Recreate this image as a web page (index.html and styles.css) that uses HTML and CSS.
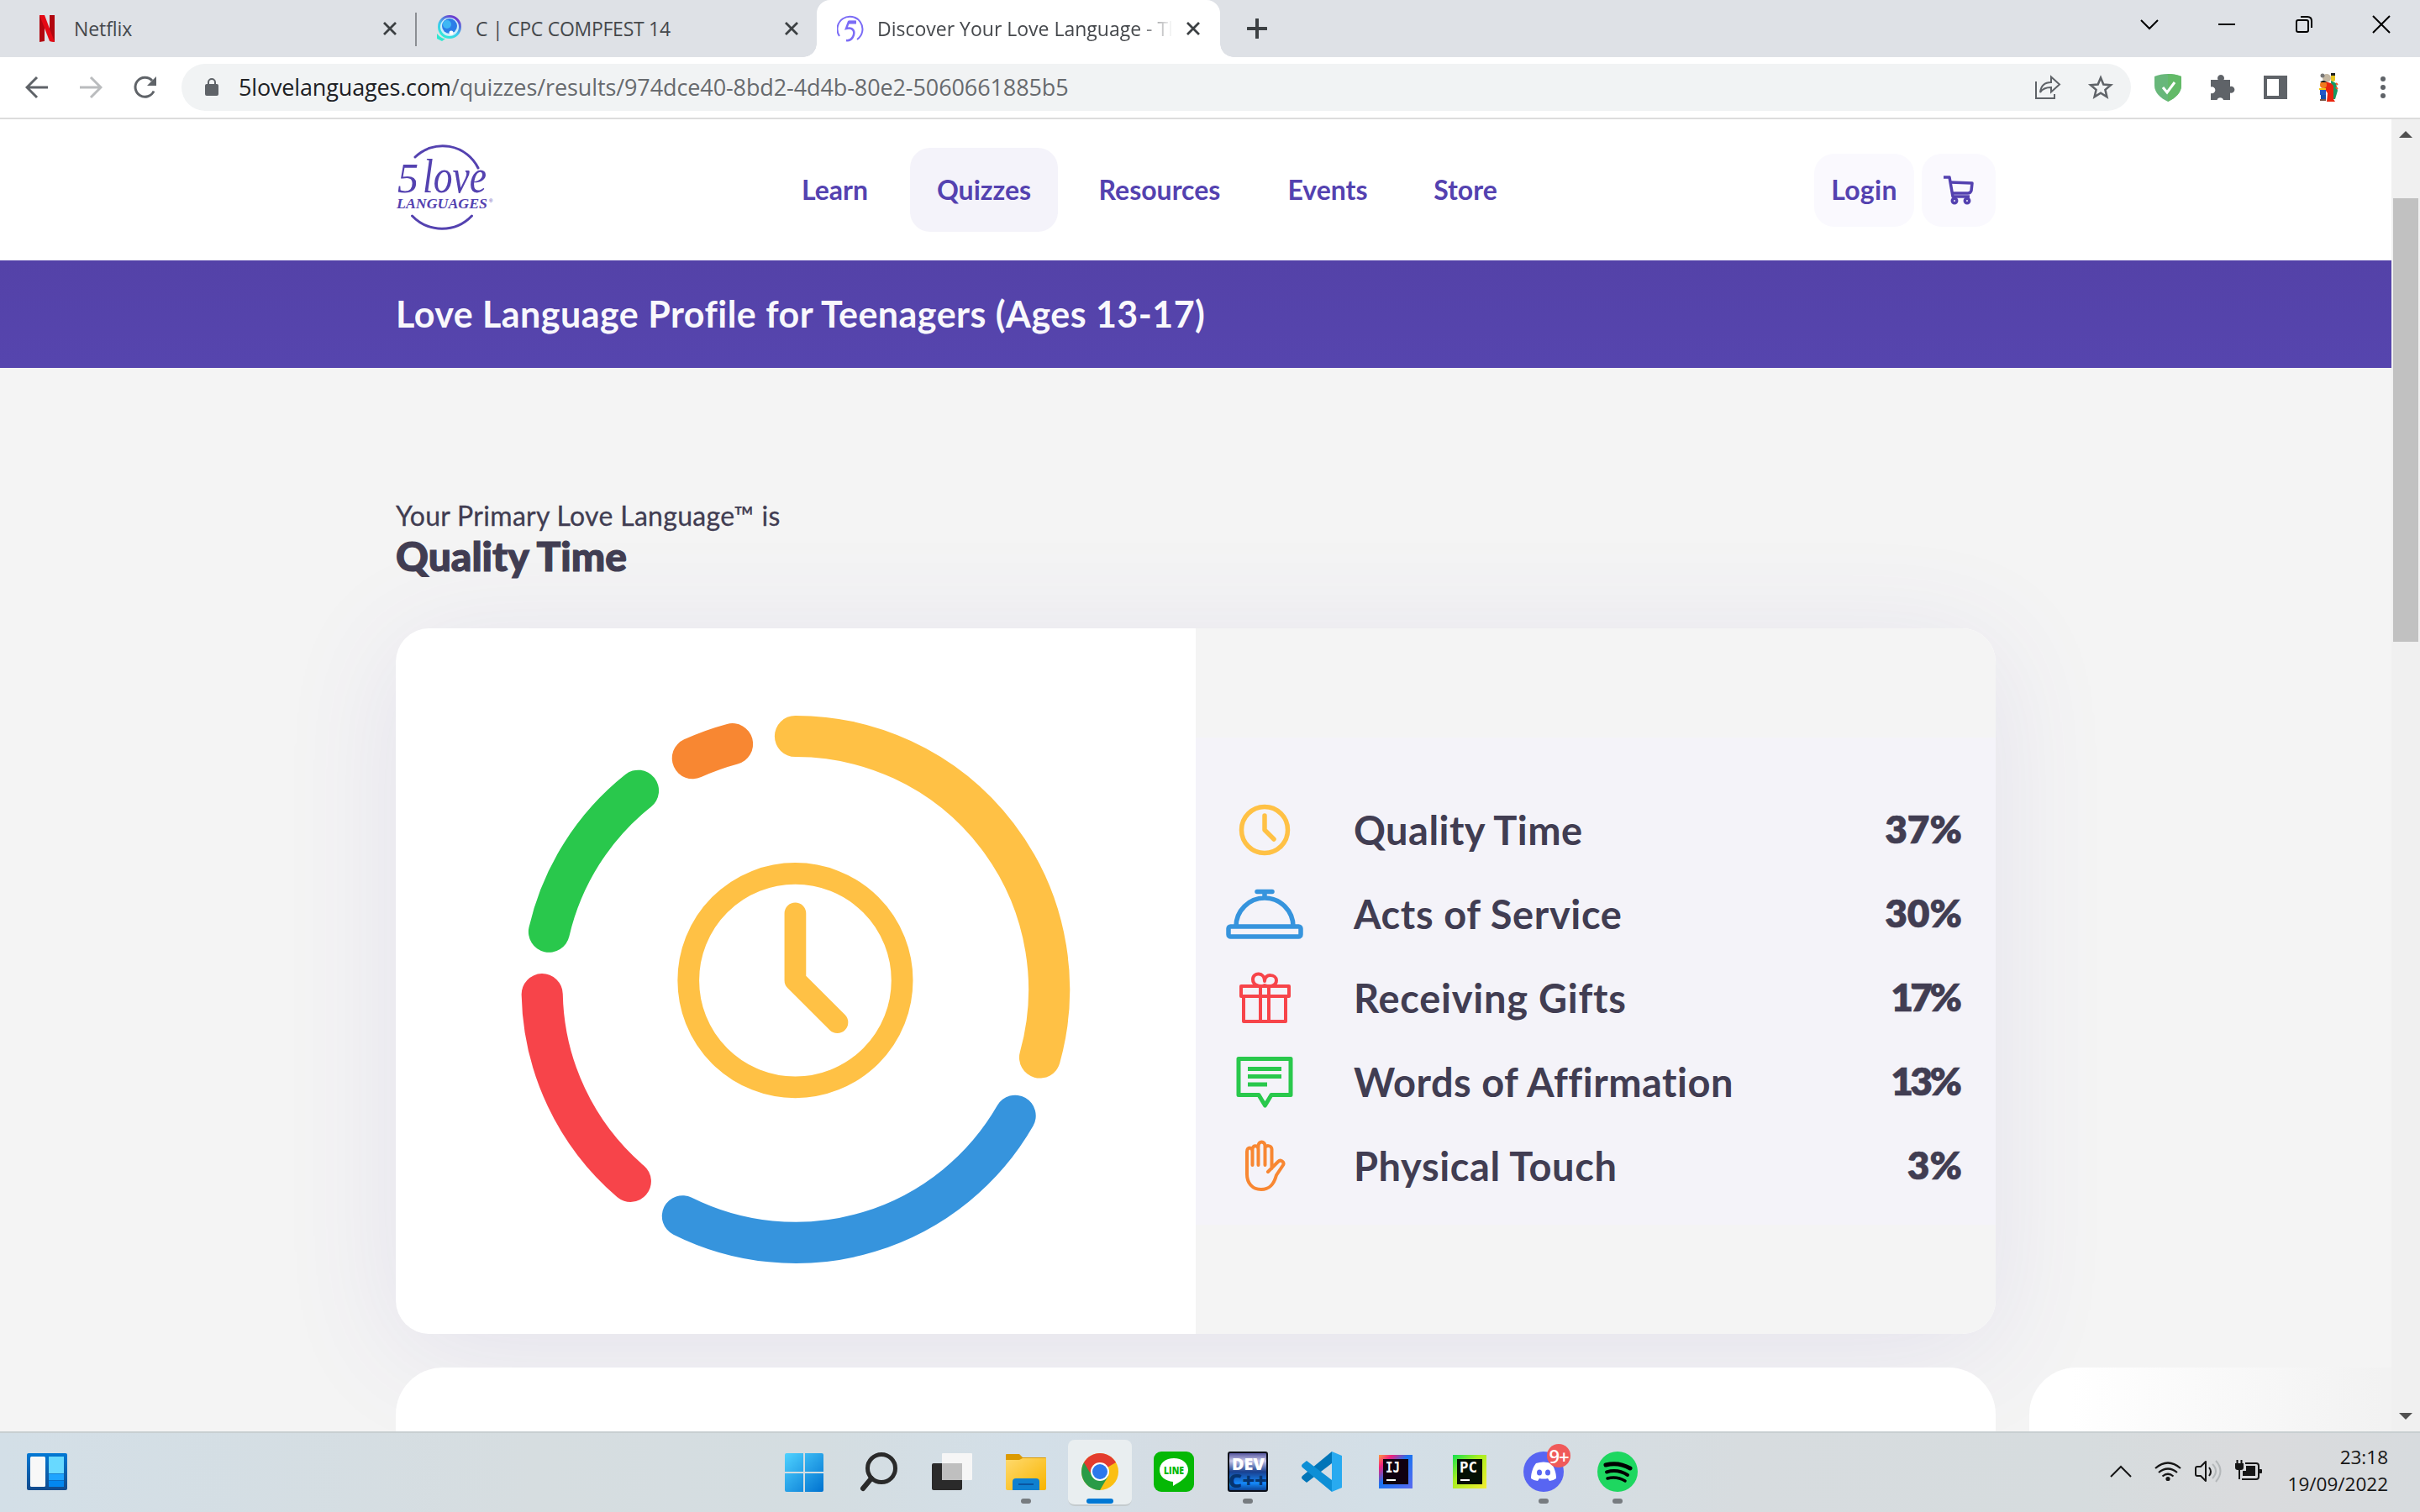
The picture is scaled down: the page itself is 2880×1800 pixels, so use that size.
FILE: index.html
```html
<!DOCTYPE html>
<html lang="en">
<head>
<meta charset="utf-8">
<title>Discover Your Love Language</title>
<link rel="stylesheet" href="styles.css">
</head>
<body>
<div class="tabs">
  <div class="tab tab-a">
    <svg class="fav" width="32" height="32" viewBox="0 0 32 32"><path d="M7 0h6v31l-6 1zM19 0h6v32l-6-1z" fill="#b1060f"/><path d="M7 0h6l12 32-6-1z" fill="#e50914"/></svg>
    <span class="tab-name t1">Netflix</span>
    <svg class="x" width="16" height="16" viewBox="0 0 16 16"><path d="M1 1l14 14M15 1L1 15"/></svg>
  </div>
  <div class="tab tab-b">
    <svg class="fav" width="32" height="32" viewBox="0 0 32 32"><defs><linearGradient id="cf" x1="0" y1="1" x2=".6" y2="0"><stop offset="0" stop-color="#2ff5d0"/><stop offset=".5" stop-color="#3cc8ee"/><stop offset="1" stop-color="#6a3fd0"/></linearGradient></defs><circle cx="17" cy="14" r="12.500" fill="#cdeefa" stroke="url(#cf)" stroke-width="3"/><circle cx="17" cy="13" r="9" fill="#2b7de8"/><circle cx="14" cy="11" r="5" fill="#3eb7f4"/><path d="M2 22q5 6 10 6l-4 3-6-3z" fill="#2fe8d0"/><circle cx="19" cy="21" r="2.500" fill="#fff"/></svg>
    <span class="tab-name t2">C | CPC COMPFEST 14</span>
    <svg class="x" width="16" height="16" viewBox="0 0 16 16"><path d="M1 1l14 14M15 1L1 15"/></svg>
  </div>
  <div class="tab tab-c">
    <svg class="fav" width="32" height="32" viewBox="0 0 32 32" fill="none" stroke="#7b6cf6" stroke-width="2"><path d="M3 25A15 15 0 1 1 24 29"/><path d="M22 8h-8l-3 8c9-2 11 4 8 10q-3 5-8 4" stroke-width="2.500"/><path d="M14 8.500h9" stroke-width="4"/></svg>
    <span class="tab-name t3">Discover Your Love Language - Th</span>
    <svg class="x" width="16" height="16" viewBox="0 0 16 16"><path d="M1 1l14 14M15 1L1 15"/></svg>
  </div>
  <svg class="plus" width="24" height="24" viewBox="0 0 24 24"><path d="M12 1v22M1 12h22"/></svg>
  <div class="win">
    <svg width="20" height="20" viewBox="0 0 20 20"><path d="M0 5l10 10L20 5"/></svg>
    <svg width="20" height="20" viewBox="0 0 20 20"><path d="M0 10h20"/></svg>
    <svg width="20" height="20" viewBox="0 0 20 20"><rect x="1" y="5" width="14" height="14" rx="2"/><path d="M6 1h8q5 0 5 5v8"/></svg>
    <svg width="20" height="20" viewBox="0 0 20 20"><path d="M0 0l20 20M20 0L0 20"/></svg>
  </div>
</div>
<div class="toolbar">
  <svg class="nav-ic" width="28" height="28" viewBox="0 0 28 28" stroke="#5f6368"><path d="M27 14H3M14 2L2 14l12 12"/></svg>
  <svg class="nav-ic" width="28" height="28" viewBox="0 0 28 28" stroke="#babcbe"><path d="M1 14h24M14 2l12 12-12 12"/></svg>
  <svg class="nav-ic" width="28" height="28" viewBox="0 0 28 28" stroke="#5f6368"><path d="M25 18.500A11.500 11.500 0 1 1 23 6"/><path d="M28 1v11H17z" fill="#5f6368" stroke="none"/></svg>
  <div class="omni">
    <svg class="lock" width="16" height="22" viewBox="0 0 16 22"><rect y="7" width="16" height="14" rx="2" fill="#5f6368"/><path d="M4 8V5a4 4 0 0 1 8 0v3" fill="none" stroke="#5f6368" stroke-width="2"/></svg>
    <span class="url"><b>5lovelanguages.com</b><span class="rest">/quizzes/results/974dce40-8bd2-4d4b-80e2-5060661885b5</span></span>
    <svg class="share" width="32" height="32" viewBox="0 0 32 32" fill="none" stroke="#5f6368" stroke-width="2"><path d="M2 9v20h22v-5"/><path d="M7 22c1-9 6-12 13-12V3.500l10 9-10 9V16c-6 0-10 1-13 6z"/></svg>
    <svg width="32" height="32" viewBox="0 0 32 32" fill="none" stroke="#5f6368" stroke-width="2.500"><path d="M16 4.500l3.300 8 8.700.700-6.600 5.700 2 8.400L16 22.800l-7.400 4.500 2-8.400L4 13.200l8.700-.700z"/></svg>
  </div>
  <div class="ext">
    <svg width="34" height="34" viewBox="0 0 34 34"><path d="M17 1q9 0 16 3v11c0 8-7 15-16 19C8 30 1 23 1 15V4q7-3 16-3z" fill="#68b77a"/><path d="M17 1q9 0 16 3v11c0 8-7 15-16 19z" fill="#63ba68"/><path d="M11 17l5 6 9-12" fill="none" stroke="#fff" stroke-width="3"/></svg>
    <svg width="34" height="34" viewBox="0 0 34 34"><path d="M4 8h8.500a4 4 0 1 1 7 0H27v8a4 4 0 1 1 0 7.500V32h-8a3.900 3.900 0 0 0-7.500 0H4v-8a4 4 0 1 0 0-7.500z" fill="#5f6368"/></svg>
    <svg width="34" height="34" viewBox="0 0 34 34"><path d="M3 3h28v28H3zm4 4v20h14V7z" fill="#5f6368" fill-rule="evenodd"/></svg>
    <svg width="34" height="34" viewBox="0 0 34 34"><circle cx="14" cy="6" r="5" fill="#c4b7a2"/><circle cx="9" cy="3" r="2.500" fill="#777"/><rect x="19" y="1" width="5" height="9" rx="2" fill="#e8c520"/><path d="M19 0h5v3h-5z" fill="#222"/><path d="M19 9l6 3 2 9-3 10h-4z" fill="#159a62"/><path d="M12 10l7 2 3 3v16l2 3H14l1-10-4-6z" fill="#e9250e"/><circle cx="10" cy="14" r="4" fill="#f07a1c"/><path d="M6 11q4-4 8 0z" fill="#111"/><path d="M6 18h7v8H6z" fill="#2258c8"/><path d="M5 19h8" stroke="#f1c40f" stroke-width="2"/><path d="M7 26h6v6H7z" fill="#1550ae"/><path d="M6 32h7" stroke="#754" stroke-width="2"/><path d="M25 12l2 2M25 17l2 2" stroke="#f05a28" stroke-width="2"/></svg>
    <svg width="34" height="34" viewBox="0 0 34 34" fill="#5f6368"><circle cx="17" cy="7" r="3"/><circle cx="17" cy="17" r="3"/><circle cx="17" cy="27" r="3"/></svg>
  </div>
</div>
<div class="view">
  <main class="page">
    <header class="head">
      <svg class="logo" width="120" height="104" viewBox="0 0 120 104" fill="#5442b0"><g fill="none" stroke="#5442b0" stroke-width="3" stroke-linecap="round"><path d="M22 16A47 47 0 0 1 97 29"/><path d="M18.500 86A49 49 0 0 0 89.500 86"/></g><text class="lg5" x="1" y="58" textLength="25" lengthAdjust="spacingAndGlyphs">5</text><text class="lgv" x="31" y="58" textLength="76" lengthAdjust="spacingAndGlyphs">love</text><text class="lgl" x="0" y="77" textLength="108" lengthAdjust="spacingAndGlyphs">LANGUAGES</text><text class="lgr" x="110" y="70">®</text></svg>
      <nav class="menu"><a class="m1">Learn</a><a class="m2 on">Quizzes</a><a class="m3">Resources</a><a class="m4">Events</a><a class="m5">Store</a></nav>
      <div class="acct"><a class="login">Login</a><a class="cart"><svg width="36" height="36" viewBox="0 0 36 36" fill="none" stroke="#5442b0" stroke-width="3.500" stroke-linejoin="round"><path d="M0 3h7l4 23h20"/><path d="M8 9l26 1-1 9q-1 3-4 3H11"/><circle cx="13" cy="31" r="2.700"/><circle cx="28" cy="31" r="2.700"/></svg></a></div>
    </header>
    <div class="banner"><h1>Love Language Profile for Teenagers (Ages 13-17)</h1></div>
    <section class="content">
      <p class="lead">Your Primary Love Language™ is</p>
      <h2>Quality Time</h2>
      <div class="card">
        <div class="chart">
          <svg width="720" height="720" viewBox="0 0 1568 1568" fill="none" stroke-linecap="round" stroke-linejoin="round">
            <g stroke-width="107">
              <path stroke="#ffc145" d="M798 123A656.500 656.500 0 0 1 1432 956"/>
              <path stroke="#3694dd" d="M1368 1107A656.500 656.500 0 0 1 506 1367"/>
              <path stroke="#f7444a" d="M371 1277A656.500 656.500 0 0 1 142 792"/>
              <path stroke="#29c84c" d="M160 630A656.500 656.500 0 0 1 391 264"/>
              <path stroke="#f88732" d="M532 180A656.500 656.500 0 0 1 635 143"/>
            </g>
            <g stroke="#ffc145" stroke-width="56"><circle cx="798" cy="756" r="277"/><path d="M798 582V756L907 865"/></g>
          </svg>
        </div>
        <div class="scores"><div class="rows">
          <div class="row"><svg width="96" height="64" viewBox="0 0 96 64" fill="none" stroke="#ffc145" stroke-width="5.500" stroke-linecap="round" stroke-linejoin="round"><circle cx="48" cy="32" r="27.500"/><path d="M48 15v17l11 11"/></svg><span class="nm n1">Quality Time</span><span class="pc">37%</span></div>
          <div class="row"><svg width="96" height="64" viewBox="0 0 96 64" fill="none" stroke="#3694dd" stroke-width="5.500" stroke-linejoin="round"><rect x="5" y="47" width="86" height="12" rx="2.500"/><path d="M14 47a34 34 0 0 1 68 0M48 8v5"/><path d="M39 5.500h18" stroke-linecap="round"/></svg><span class="nm n2">Acts of Service</span><span class="pc">30%</span></div>
          <div class="row"><svg width="96" height="64" viewBox="0 0 96 64" fill="none" stroke="#f7444a" stroke-width="4" stroke-linejoin="round"><rect x="20" y="18" width="57" height="12"/><path d="M23 30v30h50V30M43 18v42M53 18v42"/><path d="M48 17C41 20 34 16 34 10c0-9 14-9 14 2 0-10 14-8 14-1 0 6-7 9-14 6z"/></svg><span class="nm n3">Receiving Gifts</span><span class="pc one">17%</span></div>
          <div class="row"><svg width="96" height="64" viewBox="0 0 96 64" fill="none" stroke="#29c84c" stroke-width="5" stroke-linejoin="round"><path d="M17 4.500h62v43H56l-7.500 12.500L41 47.500H17z"/><path d="M28 16.500h40M28 25.500h40M28 35h23"/></svg><span class="nm n4">Words of Affirmation</span><span class="pc one">13%</span></div>
          <div class="row"><svg width="96" height="64" viewBox="0 0 96 64" fill="none" stroke="#f88732" stroke-width="4" stroke-linecap="round" stroke-linejoin="round"><path d="M33.500 31V15c0-6-6.500-6-6.500 0v27c0 10 6 18 17 18 10 0 15-6 18-17l8-12c2-4-3-7-6-4L52 39M33.500 15v-3c0-5 7-5 7 0v19M40.500 10V8c0-6 8-6 8 0v23M48.500 11c0-4 8-4 8 1v23"/></svg><span class="nm n5">Physical Touch</span><span class="pc">3%</span></div>
        </div></div>
      </div>
      <div class="more"><div class="box"></div><div class="box fade"></div></div>
    </section>
  </main>
  <div class="scroll"><i class="up"></i><i class="thumb"></i><i class="down"></i></div>
</div>
<footer class="task">
  <svg class="widget" width="48" height="44" viewBox="0 0 48 44"><defs><linearGradient id="wg" x1="0" y1="0" x2="0" y2="1"><stop offset="0" stop-color="#0278d4"/><stop offset="1" stop-color="#124a8c"/></linearGradient></defs><rect width="48" height="44" rx="2" fill="url(#wg)"/><rect x="4" y="4" width="18" height="36" rx="1.500" fill="#f8f8f8"/><path d="M26 4h18v20H26z" fill="#68d9ff"/><path d="M26 24.500h18v7.500H26z" fill="#1ea4ff"/><path d="M26 32.500h18V40H26z" fill="#0287f0"/></svg>
  <div class="apps">
    <div class="app"><svg width="48" height="48" viewBox="0 0 48 48"><defs><linearGradient id="w1" x1="0" y1="0" x2="1" y2="1"><stop offset="0" stop-color="#4fd2ff"/><stop offset="1" stop-color="#0072d0"/></linearGradient></defs><path d="M3 2h20v22H1V4q0-2 2-2zM25 2h20q2 0 2 2v20H25zM1 26h22v22H3q-2 0-2-2zM25 26h22v20q0 2-2 2H25z" fill="url(#w1)"/></svg></div>
    <div class="app"><svg width="48" height="48" viewBox="0 0 48 48" fill="none" stroke="#2a2a2a"><circle cx="28" cy="20" r="16.500" stroke-width="5"/><path d="M16 32L6 44" stroke-width="6" stroke-linecap="round"/></svg></div>
    <div class="app"><svg width="48" height="48" viewBox="0 0 48 48"><rect x="12" y="2" width="36" height="32" rx="1" fill="#f6f6f6"/><rect x="0" y="14" width="36" height="32" rx="2" fill="#2a2a2a"/><path d="M12 14h24v20H12z" fill="#bfbfbf"/></svg></div>
    <div class="app"><svg width="48" height="48" viewBox="0 0 48 48"><defs><linearGradient id="fg" x1="0" y1="0" x2="1" y2="1"><stop offset="0" stop-color="#ffda6e"/><stop offset="1" stop-color="#f8b400"/></linearGradient></defs><path d="M0 4q0-1 1-1h15l4 4h27q1 0 1 1v8H0z" fill="#dc9a00"/><path d="M0 10h16l4-2h28v36q0 2-2 2H2q-2 0-2-2z" fill="url(#fg)"/><path d="M8 46V36q0-4 4-4h24q4 0 4 4v10z" fill="#0f80d0"/><path d="M15 39h18" stroke="#0a55a0" stroke-width="2"/></svg><i class="dot"></i></div>
    <div class="app active"><svg width="48" height="48" viewBox="0 0 48 48"><circle cx="24" cy="24" r="22" fill="#fbbf12"/><path d="M24 24L5 13A22 22 0 0 1 43 13z" fill="#e33b2e"/><path d="M24 24L5 13A22 22 0 0 0 24 46l10-17z" fill="#2a9b48"/><path d="M5 13l7 12 12-6V13z" fill="#e33b2e"/><circle cx="24" cy="24" r="11" fill="#fff"/><circle cx="24" cy="24" r="9" fill="#2d78ec"/></svg><i class="dot"></i></div>
    <div class="app"><svg width="48" height="48" viewBox="0 0 48 48"><rect width="48" height="48" rx="9" fill="#05b805"/><path d="M24 8c10 0 17 6 17 14 0 9-10 14-18 19v-5C14 35 7 30 7 22S14 8 24 8z" fill="#fff"/><text x="12" y="26.500" font-size="12" font-weight="800" fill="#05b805" textLength="24" lengthAdjust="spacingAndGlyphs">LINE</text></svg></div>
    <div class="app"><svg width="48" height="48" viewBox="0 0 48 48"><defs><linearGradient id="dg" x1="0" y1="0" x2="0" y2="1"><stop offset="0" stop-color="#4a4a96"/><stop offset=".22" stop-color="#c5c5e8"/><stop offset=".5" stop-color="#19408f"/><stop offset=".8" stop-color="#1488f8"/><stop offset="1" stop-color="#0b3c8c"/></linearGradient></defs><rect x="1" y="1" width="46" height="46" rx="2" fill="url(#dg)" stroke="#0b0f18" stroke-width="2"/><text x="5" y="22" font-size="19" font-weight="800" fill="#fff" textLength="39" lengthAdjust="spacingAndGlyphs">DEV</text><text x="1" y="43" font-size="22" font-weight="800" fill="#06346f" textLength="46" lengthAdjust="spacingAndGlyphs">C++</text></svg><i class="dot"></i></div>
    <div class="app"><svg width="48" height="48" viewBox="0 0 48 48"><path d="M36 0v14L6 37l-5-4q-2-2 0-4z" fill="#0075b8"/><path d="M36 48V34L6 11l-5 4q-2 2 0 4z" fill="#0d8fd6"/><path d="M36 0l12 5v38l-12 5z" fill="#28aaf0"/></svg></div>
    <div class="app"><svg width="48" height="48" viewBox="0 0 48 48"><defs><linearGradient id="ij" x1="0" y1="0" x2="1" y2="1"><stop offset="0" stop-color="#ff9a3c"/><stop offset=".2" stop-color="#f0207c"/><stop offset=".45" stop-color="#1a74f0"/><stop offset="1" stop-color="#5a6af0"/></linearGradient></defs><rect x="4" y="4" width="40" height="40" fill="url(#ij)"/><rect x="9" y="9" width="30" height="30" fill="#10000f"/><text class="ide" x="12" y="24.500" textLength="17" lengthAdjust="spacingAndGlyphs">IJ</text><path d="M13 34h11" stroke="#fff" stroke-width="2"/></svg></div>
    <div class="app"><svg width="48" height="48" viewBox="0 0 48 48"><defs><linearGradient id="pc" x1="0" y1="0" x2="1" y2="1"><stop offset="0" stop-color="#14e050"/><stop offset=".4" stop-color="#a6ee20"/><stop offset="1" stop-color="#f4ec30"/></linearGradient></defs><rect x="4" y="4" width="40" height="40" fill="url(#pc)"/><rect x="9" y="9" width="30" height="30" fill="#031003"/><text class="ide" x="12" y="24.500" textLength="21" lengthAdjust="spacingAndGlyphs">PC</text><path d="M13 34h11" stroke="#fff" stroke-width="2"/></svg></div>
    <div class="app"><svg width="48" height="48" viewBox="0 0 48 48"><circle cx="24" cy="24" r="24" fill="#5865f2"/><path d="M15 14q9-3 18 0c4 5 6 12 6 18q-4 3-8 3l-2-3q-5 1-10 0l-2 3q-4 0-8-3c0-6 2-13 6-18z" fill="#fff"/><ellipse cx="19" cy="25" rx="3" ry="3.500" fill="#5865f2"/><ellipse cx="29" cy="25" rx="3" ry="3.500" fill="#5865f2"/></svg><b class="badge">9+</b><i class="dot"></i></div>
    <div class="app"><svg width="48" height="48" viewBox="0 0 48 48" fill="none" stroke="#000" stroke-linecap="round"><circle cx="24" cy="24" r="24" fill="#1ed760" stroke="none"/><path d="M10 16q15-4 29 4" stroke-width="5"/><path d="M11 24.500q13-4 25 3.500" stroke-width="4"/><path d="M12 32q11-3 21 3" stroke-width="3.500"/></svg><i class="dot"></i></div>
  </div>
  <div class="tray">
    <svg width="28" height="32" viewBox="0 0 28 32" fill="none" stroke="#161616" stroke-width="2"><path d="M2 22l12-12 12 12"/></svg>
    <svg width="34" height="32" viewBox="0 0 34 32" fill="none" stroke="#161616" stroke-width="2.200"><path d="M2 12q15-13 30 0M6 17q11-9 22 0M10.500 21.500q6.500-5.500 13 0"/><circle cx="17" cy="24.500" r="2.600" fill="#161616" stroke="none"/></svg>
    <svg width="34" height="32" viewBox="0 0 34 32" fill="none" stroke="#161616" stroke-width="2"><path d="M2 12q0-2 2-2h4l6-6v23l-6-6H4q-2 0-2-2z" stroke-linejoin="round"/><path d="M18 11q4 5 0 10"/><path d="M22 7q8 8 0 17M26 3q11 12 0 25" stroke="#b4b8ba"/></svg>
    <svg width="34" height="32" viewBox="0 0 34 32" fill="none" stroke="#161616" stroke-width="2"><path d="M13 6h13q3 0 3 3v13q0 3-3 3H9"/><path d="M10 15h4V9h11v12H10z" fill="#161616" stroke="none"/><path d="M29 13h3q1 0 1 1v3q0 1-1 1h-3z" fill="#161616" stroke="none"/><path d="M1 6h10v5q0 3-3 3H4q-3 0-3-3z" fill="#161616" stroke="none"/><path d="M3.500 2v5M8.500 2v5M6 13v12"/></svg>
    <div class="time"><span class="hm">23:18</span><span class="dt">19/09/2022</span></div>
  </div>
</footer>
</body>
</html>
```
FILE: styles.css
```css
* { box-sizing: border-box; }
html, body { margin: 0; height: 1800px; overflow: hidden; }
body { width: 2880px; display: flex; flex-direction: column; font-family: "Open Sans", "Noto Sans", sans-serif; background: #f4f4f4; }
svg { display: block; flex: none; }

/* window tabs */
.tabs { height: 68px; background: #dee1e6; display: flex; align-items: center; flex: none; }
.tab { display: flex; align-items: center; height: 68px; }
.tab-a { width: 496px; padding: 0 24px 0 40px; position: relative; }
.tab-a::after { content: ""; position: absolute; right: 0; top: 15px; width: 2px; height: 40px; background: #8b8e93; }
.tab-b { width: 476px; padding: 0 22px 0 22px; }
.tab-c { width: 480px; padding: 0 24px; background: #fff; border-radius: 16px 16px 0 0; position: relative; }
.tab-c::before, .tab-c::after { content: ""; position: absolute; bottom: 0; width: 16px; height: 16px; }
.tab-c::before { left: -16px; background: radial-gradient(circle at 0 0, transparent 15.5px, #fff 16px); }
.tab-c::after { right: -16px; background: radial-gradient(circle at 100% 0, transparent 15.5px, #fff 16px); }
.tab-name { font-size: 23px; line-height: 34px; color: #45484c; margin-left: 16px; margin-top: -1px; white-space: nowrap; overflow: hidden; flex: 1; letter-spacing: -.1px; }
.tab-name.t2 { letter-spacing: -.27px; }
.tab-name.t3 { flex: none; width: 350px; margin-right: 18px; letter-spacing: 0; -webkit-mask-image: linear-gradient(90deg, #000 310px, transparent 352px); }
.x { stroke: #3c4043; stroke-width: 2.8; }
.plus { margin-left: 32px; stroke: #3c4043; stroke-width: 4; stroke-linecap: round; }
.win { margin-left: auto; display: flex; gap: 72px; padding-right: 36px; margin-top: -10px; }
.win svg { fill: none; stroke: #000; stroke-width: 2; overflow: visible; }

/* toolbar */
.toolbar { height: 74px; background: #fff; border-bottom: 2px solid #dcdcdc; display: flex; align-items: center; padding-left: 30px; flex: none; }
.nav-ic { fill: none; stroke-width: 3; margin-right: 36px; }
.nav-ic:nth-child(3) { margin-right: 30px; }
.omni { width: 2320px; height: 56px; border-radius: 28px; background: #f1f3f4; display: flex; align-items: center; padding: 0 20px 0 28px; }
.url { margin-left: 24px; font-size: 27px; color: #676a6e; margin-right: auto; white-space: nowrap; line-height: 40px; letter-spacing: -.1px; }
.url b { font-weight: 400; color: #202124; letter-spacing: -.16px; }
.share { margin-right: 31px; }
.ext { display: flex; gap: 30px; padding-left: 27px; }

/* page */
.view { height: 1562px; display: flex; flex: none; }
.page { width: 2846px; height: 1562px; overflow: hidden; font-family: Lato, sans-serif; color: #413d52; }
.head { height: 168px; background: #fff; padding: 0 471px 0 472px; display: flex; align-items: center; }
.logo { margin-top: -6px; overflow: visible; }
.lg5 { font: italic 50px "Liberation Serif", serif; }
.lgv { font: italic 56px "Liberation Serif", serif; }
.lgl { font: italic bold 17px "Liberation Serif", serif; }
.lgr { font: 6px "Liberation Sans", sans-serif; }
.menu { display: flex; align-items: center; margin-left: 331px; color: #5442b0; font-weight: 700; font-size: 32px; }
.menu a { height: 100px; line-height: 100px; border-radius: 24px; white-space: nowrap; flex: none; text-align: center; }
.menu .m1 { width: 141px; }
.menu .m2 { width: 176px; margin: 0 16px 0 19px; background: #f4f3fa; }
.menu .m3 { width: 210px; }
.menu .m4 { width: 158px; margin: 0 16px; }
.menu .m5 { width: 138px; }
.acct { margin-left: auto; display: flex; gap: 9px; color: #5442b0; font-size: 32px; font-weight: 700; letter-spacing: .3px; }
.acct a { height: 87px; line-height: 86px; border-radius: 24px; background: #faf9fe; }
.login { width: 119px; text-align: center; }
.cart { width: 88px; display: flex; align-items: center; justify-content: center; }
.banner { height: 128px; padding-left: 471px; background: linear-gradient(#5442a8, #5645ae); }
h1 { margin: 0; font-size: 43px; line-height: 128px; font-weight: 700; color: #f9f8fc; white-space: nowrap; letter-spacing: .47px; }
.content { padding: 154px 0 0 471px; }
.lead { margin: 0; font-size: 32px; line-height: 44px; letter-spacing: .3px; -webkit-text-stroke: .3px currentColor; }
h2 { margin: -2px 0 0; font-size: 48px; line-height: 56px; font-weight: 900; -webkit-text-stroke: 1.2px currentColor; }
.card { margin-top: 58px; width: 1904px; height: 840px; border-radius: 40px; display: flex; background: #fff; overflow: hidden; box-shadow: 0 20px 140px rgba(86, 69, 174, .1); }
.chart { width: 952px; padding: 72px 0 0 109px; }
.scores { flex: 1; background: #f4f4f4; padding: 130px 0; }
.rows { height: 580px; background: #f4f3f9; padding: 60px 40px 20px 34px; }
.row { height: 100px; display: flex; align-items: center; }
.nm { margin-left: 58px; font-size: 47px; line-height: 64px; font-weight: 700; white-space: nowrap; }
.n1 { letter-spacing: .45px; }
.n2 { letter-spacing: .6px; }
.n3 { letter-spacing: .75px; }
.n4 { letter-spacing: .5px; }
.n5 { letter-spacing: .6px; }
.pc { margin-left: auto; font-size: 46px; line-height: 62px; margin-top: -2px; font-weight: 800; -webkit-text-stroke: .6px currentColor; }
.one { letter-spacing: -3.5px; margin-right: 3.5px; }
.more { display: flex; gap: 40px; margin-top: 40px; }
.box { width: 1904px; height: 200px; border-radius: 56px; background: #fff; flex: none; }
.fade { width: 500px; background: linear-gradient(90deg, #fff 50px, #f2f2f2 420px); }
.scroll { width: 34px; background: #f0f0f0; display: flex; flex-direction: column; align-items: center; }
.scroll i { display: block; }
.up { border: 8px solid transparent; border-top: 0; border-bottom: 8px solid #505050; margin-top: 14px; }
.thumb { width: 30px; height: 528px; background: #c1c1c1; margin-top: 72px; }
.down { border: 8px solid transparent; border-bottom: 0; border-top: 8px solid #505050; margin-top: auto; margin-bottom: 14px; }

/* taskbar */
.task { height: 96px; flex: none; display: flex; align-items: center; border-top: 2px solid #c8cfd1; background: linear-gradient(90deg, #d3dfe7, #d6dde0 22%, #d4dde1 34%, #d3dfe8 43%, #d5dce2 50%, #d3dfe7 57%, #d7dcdf 72%, #d6dcde 86%, #dadbdd 93%, #d7dbde); position: relative; }
.widget { margin-left: 32px; margin-top: -2px; }
.apps { display: flex; margin-left: 833px; margin-top: -2px; }
.app { width: 88px; height: 94px; display: flex; align-items: center; justify-content: center; position: relative; }
.app text { font-family: "Open Sans", sans-serif; }
.app .ide { font: bold 17px "DejaVu Sans Mono", monospace; fill: #fff; }
.dot { position: absolute; left: 38px; bottom: 9px; width: 12px; height: 6px; border-radius: 3px; background: #777c80; }
.active::before { content: ""; position: absolute; left: 6px; top: 9px; width: 76px; height: 77px; border-radius: 8px; background: #e9eef0; border-bottom: 2px solid #c4cbce; }
.active svg { position: relative; }
.active .dot { left: 28px; width: 32px; background: #0078d4; }
.badge { position: absolute; left: 48px; top: 14px; width: 28px; height: 28px; border-radius: 14px; background: #f05a5a; color: #fff; font-size: 22px; line-height: 28px; text-align: center; font-weight: 600; letter-spacing: -1px; }
.tray { margin-left: auto; padding-right: 38px; display: flex; align-items: center; margin-top: -2px; }
.tray svg { margin-right: 14px; }
.tray svg:first-child { margin-right: 25px; }
.time { width: 135px; display: flex; flex-direction: column; align-items: flex-end; font-size: 22.5px; line-height: 32px; color: #161616; margin-top: -2px; }
```
